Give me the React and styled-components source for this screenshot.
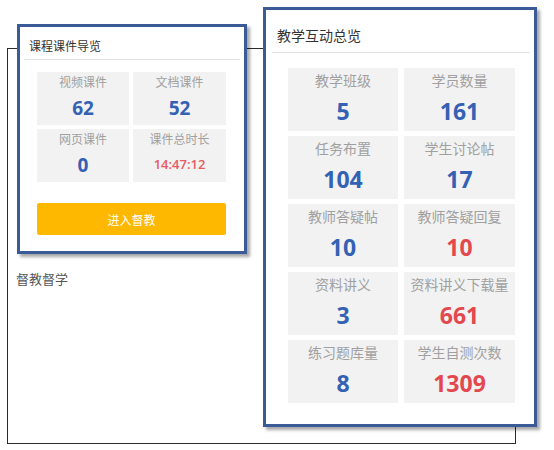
import React from "react";
import styled, { createGlobalStyle } from "styled-components";

const GlobalStyle = createGlobalStyle`
  html, body {
    margin: 0;
    padding: 0;
    background: #ffffff;
  }
  body {
    font-family: "Open Sans", "Noto Sans CJK SC", sans-serif;
    color: #333;
  }
`;

const Frame = styled.div`
  box-sizing: border-box;
  margin: 48px 0 0 7px;
  width: 509px;
  height: 396px;
  border: 1px solid #2b2b2b;
  display: flex;
  align-items: flex-start;
`;

const LeftColumn = styled.div`
  display: flex;
  flex-direction: column;
`;

const Card = styled.section`
  box-sizing: border-box;
  background: #fff;
  border: 3px solid #3a5b98;
  box-shadow: 3px 3px 3px rgba(0, 0, 0, 0.35);
  display: flex;
  flex-direction: column;
  width: ${(p) => p.$w}px;
  height: ${(p) => p.$h}px;
  margin: ${(p) => p.$margin};
  flex-shrink: 0;
`;

const CardHeader = styled.div`
  font-family: "Noto Sans CJK SC", sans-serif;
  color: #333;
  font-size: ${(p) => p.$size}px;
  line-height: ${(p) => p.$lh}px;
  padding: ${(p) => p.$pad};
  margin: ${(p) => p.$margin};
  border-bottom: 1px solid #e4e4e4;
`;

const Grid = styled.div`
  display: grid;
  grid-template-columns: ${(p) => p.$cols};
  grid-auto-rows: ${(p) => p.$rowH}px;
  column-gap: ${(p) => p.$colGap}px;
  row-gap: ${(p) => p.$rowGap}px;
  margin: ${(p) => p.$margin};
`;

const Cell = styled.div`
  background: #f2f2f2;
  display: flex;
  flex-direction: column;
  align-items: center;
  padding-top: ${(p) => p.$padTop}px;
`;

const Label = styled.div`
  font-family: "Noto Sans CJK SC", sans-serif;
  color: #a0a0a0;
  font-size: ${(p) => p.$size}px;
  line-height: 16px;
  white-space: nowrap;
`;

const Value = styled.div`
  font-family: "Open Sans", sans-serif;
  font-weight: 700;
  color: ${(p) => (p.$red ? "#e4484f" : "#3361b4")};
  font-size: ${(p) => p.$size}px;
  line-height: ${(p) => p.$lh}px;
  margin-top: ${(p) => p.$gap}px;
`;

const Duration = styled.div`
  font-family: "Open Sans", sans-serif;
  font-weight: 600;
  color: #e85a62;
  font-size: 13px;
  line-height: 20px;
  margin-top: 7px;
`;

const EnterButton = styled.button`
  margin: 21px 18px 0 17px;
  height: 32px;
  border: none;
  border-radius: 2px;
  background: #ffb800;
  color: #fff;
  font-family: "Noto Sans CJK SC", sans-serif;
  font-weight: 400;
  font-size: 12px;
  cursor: pointer;
`;

const SideText = styled.div`
  font-family: "Noto Sans CJK SC", sans-serif;
  font-size: 13px;
  line-height: 16px;
  color: #555;
  margin: 17px 0 0 8px;
`;

const courseware = [
  { label: "视频课件", value: "62" },
  { label: "文档课件", value: "52" },
  { label: "网页课件", value: "0" },
  { label: "课件总时长", value: "14:47:12", time: true },
];

const interaction = [
  { label: "教学班级", value: "5" },
  { label: "学员数量", value: "161" },
  { label: "任务布置", value: "104" },
  { label: "学生讨论帖", value: "17" },
  { label: "教师答疑帖", value: "10" },
  { label: "教师答疑回复", value: "10", red: true },
  { label: "资料讲义", value: "3" },
  { label: "资料讲义下载量", value: "661", red: true },
  { label: "练习题库量", value: "8" },
  { label: "学生自测次数", value: "1309", red: true },
];

export default function App() {
  return (
    <>
      <GlobalStyle />
      <Frame>
        <LeftColumn>
          <Card $w={230} $h={230} $margin="-25px 0 0 9px">
            <CardHeader $size={12} $lh={16} $pad="11px 0 5px 5px" $margin="0 4px 0 4px">
              课程课件导览
            </CardHeader>
            <Grid $cols="92px 93px" $rowH={53} $colGap={4} $rowGap={4} $margin="12px 18px 0 17px">
              {courseware.map((c) => (
                <Cell key={c.label} $padTop={2}>
                  <Label $size={12}>{c.label}</Label>
                  {c.time ? (
                    <Duration>{c.value}</Duration>
                  ) : (
                    <Value $size={19} $lh={24} $gap={6}>
                      {c.value}
                    </Value>
                  )}
                </Cell>
              ))}
            </Grid>
            <EnterButton>进入督教</EnterButton>
          </Card>
          <SideText>督教督学</SideText>
        </LeftColumn>
        <Card $w={274} $h={420} $margin="-42px 0 0 16px">
          <CardHeader $size={14} $lh={20} $pad="15px 0 7px 5px" $margin="0 4px 0 6px">
            教学互动总览
          </CardHeader>
          <Grid $cols="110px 111px" $rowH={63} $colGap={6} $rowGap={5} $margin="15px 19px 0 22px">
            {interaction.map((c) => (
              <Cell key={c.label} $padTop={4}>
                <Label $size={14}>{c.label}</Label>
                <Value $red={c.red} $size={23} $lh={30} $gap={8}>
                  {c.value}
                </Value>
              </Cell>
            ))}
          </Grid>
        </Card>
      </Frame>
    </>
  );
}
